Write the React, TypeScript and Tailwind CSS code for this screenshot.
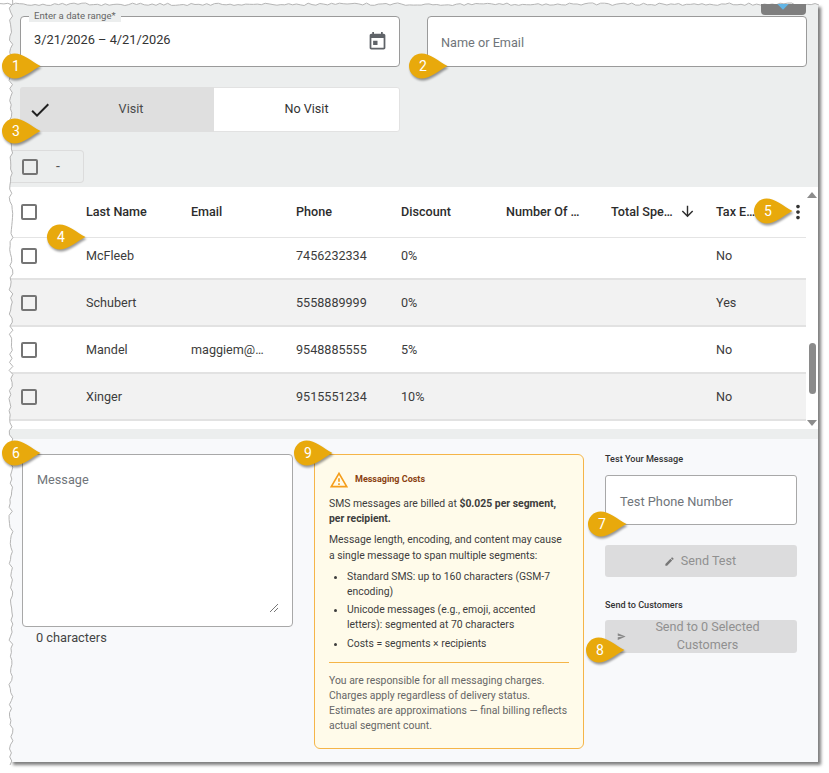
import { MdArrowDownward, MdCheck, MdEdit, MdMoreVert, MdOutlineWarningAmber, MdSend } from "react-icons/md"

const customers = [
  { last: "McFleeb", email: "", phone: "7456232334", discount: "0%", tax: "No" },
  { last: "Schubert", email: "", phone: "5558889999", discount: "0%", tax: "Yes" },
  { last: "Mandel", email: "maggiem@…", phone: "9548885555", discount: "5%", tax: "No" },
  { last: "Xinger", email: "", phone: "9515551234", discount: "10%", tax: "No" },
]

const headers = ["Last Name", "Email", "Phone", "Discount", "Number Of …"]

/** Screenshot-tool callout: a gold drop with its number. */
function Callout({ n, className }: { n: number; className: string }) {
  return (
    <div className={`absolute z-20 h-[26px] w-[40px] ${className}`}>
      <svg width="40" height="26" viewBox="0 0 40 26" className="absolute inset-0 drop-shadow-[1px_2px_1px_rgba(0,0,0,0.4)]">
        <path d="M13.5 0.5C22 0.5 31 8.5 39.5 13C31 17.5 22 25.5 13.5 25.5A12.5 12.5 0 0 1 13.5 0.5Z" fill="#e8a90c" />
      </svg>
      <span className="absolute left-0 top-0 w-[30px] text-center text-[14px] leading-[26px] text-white">{n}</span>
    </div>
  )
}

function Checkbox({ className = "" }: { className?: string }) {
  return <span className={`block h-[16px] w-[16px] rounded-[2px] border-2 border-[#757575] ${className}`} />
}

function jagged(points: number, length: number, seed: number, amp: number) {
  let v = seed
  const out: [number, number][] = []
  for (let i = 0; i <= points; i++) {
    v = (v * 9301 + 49297) % 233280
    out.push([(i / points) * length, (v / 233280) * amp])
  }
  return out
}

/** Torn left and top page edges drawn over the panel. */
function TornEdge() {
  const left = jagged(190, 765, 17, 4).map(([y, d]) => `${(9 + d).toFixed(1)},${y.toFixed(1)}`)
  const top = jagged(210, 819, 51, 2.5).map(([x, d]) => `${x.toFixed(1)},${(3 + d).toFixed(1)}`)
  return (
    <svg width="829" height="773" className="pointer-events-none absolute left-0 top-0 z-10">
      <polygon points={`0,0 ${top.join(" ")} 829,0`} fill="#fff" />
      <polygon points={`0,0 ${left.join(" ")} 0,773`} fill="#fff" />
      <polyline points={top.join(" ")} fill="none" stroke="#b5b5b5" strokeWidth="1" />
      <polyline points={left.join(" ")} fill="none" stroke="#b5b5b5" strokeWidth="1" />
    </svg>
  )
}

function CalendarIcon() {
  return (
    <svg width="21" height="21" viewBox="0 0 24 24" fill="#5f6368">
      <path d="M7 11h5v5H7zM16 1v2H8V1H6v2H5c-1.11 0-1.99.9-1.99 2L3 19c0 1.1.89 2 2 2h14c1.1 0 2-.9 2-2V5c0-1.1-.9-2-2-2h-1V1h-2zm3 18H5V8h14v11z" />
    </svg>
  )
}

function Table() {
  return (
    <div className="flex bg-white">
      <div className="w-[796px]">
        <div className="flex h-[51px] items-center whitespace-nowrap border-b border-[#e4e4e4] text-[12.6px] font-medium text-[#2c2c2c]">
          <div className="w-[76px] shrink-0 pl-[11px]">
            <Checkbox />
          </div>
          {headers.map((h) => (
            <div key={h} className="w-[105px] shrink-0">{h}</div>
          ))}
          <div className="flex w-[105px] shrink-0 items-center">
            Total Spe…
            <MdArrowDownward size={17} className="ml-[6px]" />
          </div>
          <div className="w-[71px] shrink-0">Tax E…</div>
          <MdMoreVert size={22} className="shrink-0 text-[#333]" />
        </div>
        <div className="h-[191px] overflow-hidden">
          <div className="-mt-[5px]">
            {customers.map((c, i) => (
              <div
                key={c.last}
                className={`flex h-[47px] items-center border-b-2 border-[#e2e2e2] pt-[2px] text-[12.6px] text-[#3c3c3c] ${i % 2 ? "bg-[#f2f2f2]" : "bg-white"}`}
              >
                <div className="-mt-[2px] w-[76px] pl-[11px]">
                  <Checkbox />
                </div>
                <div className="w-[105px]">{c.last}</div>
                <div className="w-[105px]">{c.email}</div>
                <div className="w-[105px]">{c.phone}</div>
                <div className="w-[105px]">{c.discount}</div>
                <div className="w-[210px]" />
                <div>{c.tax}</div>
              </div>
            ))}
          </div>
        </div>
      </div>
      <div className="relative flex w-[12px] flex-col items-center justify-between bg-white pb-[3px] pt-[5px]">
        <span className="h-0 w-0 border-x-[5px] border-b-[6px] border-x-transparent border-b-[#8c8c8c]" />
        <span className="absolute left-[3px] top-[156px] h-[51px] w-[7px] rounded-full bg-[#8a8a8a]" />
        <span className="h-0 w-0 border-x-[5px] border-t-[6px] border-x-transparent border-t-[#8c8c8c]" />
      </div>
    </div>
  )
}

function CostNotice() {
  return (
    <div className="h-[295px] w-[270px] rounded-[6px] border border-[#f5b548] bg-[#fffbea] px-[14px] pt-[15px] text-[10.4px] leading-[15.2px] text-[#3d3d3d]">
      <div className="flex items-center gap-[6px]">
        <MdOutlineWarningAmber size={20} className="text-[#f59e1b]" />
        <span className="text-[9px] font-bold text-[#8a3f10]">Messaging Costs</span>
      </div>
      <p className="mt-[6px]">
        SMS messages are billed at <b>$0.025 per segment, per recipient.</b>
      </p>
      <p className="mt-[6px]">Message length, encoding, and content may cause a single message to span multiple segments:</p>
      <ul className="mt-[6px] list-disc pl-[18px]">
        <li>Standard SMS: up to 160 characters (GSM-7 encoding)</li>
        <li className="mt-[3px]">Unicode messages (e.g., emoji, accented letters): segmented at 70 characters</li>
        <li className="mt-[3px]">Costs = segments × recipients</li>
      </ul>
      <div className="mt-[11px] whitespace-nowrap border-t border-[#f5b548] pt-[10px] text-[#666]">
        You are responsible for all messaging charges.
        <br />
        Charges apply regardless of delivery status.
        <br />
        Estimates are approximations — final billing reflects
        <br />
        actual segment count.
      </div>
    </div>
  )
}

export default function App() {
  return (
    <div className="relative h-[773px] w-[829px] overflow-hidden bg-white pt-[4px] font-['Roboto',sans-serif]">
      <div className="absolute left-[761px] top-[4px] z-20 h-[11px] w-[45px] overflow-hidden rounded-b-[4px] bg-[#7f7f7f]">
        <span className="absolute left-[18px] -top-[4px] h-[8px] w-[8px] rotate-45 bg-[#62b5e5]" />
      </div>
      <div className="ml-[10px] flex h-[758px] w-[808px] flex-col bg-[#eceeee] shadow-[3px_3px_3px_rgba(0,0,0,0.5)]">
        <div className="h-[183px] pt-[12px]">
          <div className="flex gap-[27px] pl-[10px]">
            <div className="relative flex h-[51px] w-[380px] items-center justify-between rounded-[4px] border border-[#9a9a9a] bg-white pl-[13px] pr-[11px] text-[12.8px] text-[#333]">
              <span className="absolute -top-[7px] left-[8px] bg-[#eceeee] px-[5px] text-[9.6px] leading-[12px] text-[#666]">Enter a date range*</span>
              <span className="-mt-[3px]">3/21/2026 – 4/21/2026</span>
              <CalendarIcon />
            </div>
            <div className="flex h-[51px] w-[380px] items-center rounded-[4px] border border-[#9a9a9a] bg-white pl-[13px] pt-[2px] text-[12.7px] text-[#70757a]">Name or Email</div>
          </div>
          <div className="ml-[10px] mt-[20px] flex h-[45px] w-[380px] overflow-hidden rounded-[3px] text-[12.6px]">
            <div className="relative flex w-[194px] items-center justify-center bg-[#dfdfdf] text-[#4a4a4a]">
              <MdCheck size={24} className="absolute left-[8px] text-[#222]" />
              <span className="pl-[28px]">Visit</span>
            </div>
            <div className="flex flex-1 items-center justify-center rounded-r-[3px] border border-l-0 border-[#e2e2e2] bg-white text-[#333]">No Visit</div>
          </div>
          <div className="mt-[18px] flex h-[33px] w-[74px] items-center gap-[18px] rounded-r-[4px] border border-l-0 border-[#dcdcdc] pl-[12px] text-[14px] text-[#555]">
            <Checkbox className="border-[#8a8a8a]" />
            <span>-</span>
          </div>
        </div>
        <Table />
        <div className="h-[10px] bg-[#eceeee]" />
        <div className="flex flex-1 gap-[21px] bg-[#f8f9fb] pl-[12px] pt-[15px]">
          <div className="w-[271px]">
            <div className="relative h-[173px] rounded-[4px] border border-[#a8a8a8] bg-white pl-[14px] pt-[17px] text-[12.7px] leading-[16px] text-[#70757a]">
              Message
              <svg width="8" height="8" className="absolute bottom-[14px] right-[14px]" stroke="#777" strokeWidth="1">
                <path d="M0 8L8 0M4 8L8 4" />
              </svg>
            </div>
            <div className="pl-[14px] pt-[1px] text-[12.8px] text-[#444]">0 characters</div>
          </div>
          <CostNotice />
          <div className="w-[192px] pl-0">
            <div className="ml-0 text-[9.1px] font-medium leading-[10px] text-[#333]">Test Your Message</div>
            <div className="mt-[11px] flex h-[50px] items-center rounded-[3px] border border-[#a8a8a8] bg-white pl-[14px] pt-[3px] text-[12.8px] text-[#70757a]">Test Phone Number</div>
            <div className="mt-[20px] flex h-[32px] items-center justify-center gap-[6px] rounded-[3px] bg-[#dcdcdd] pr-[2px] text-[12.6px] text-[#909090]">
              <MdEdit size={11} className="text-[#777]" />
              Send Test
            </div>
            <div className="mt-[23px] text-[9.1px] font-medium leading-[10px] text-[#333]">Send to Customers</div>
            <div className="mt-[10px] flex h-[33px] items-center rounded-[3px] bg-[#dcdcdd] pb-[1px] pl-[12px] text-[12.6px] leading-[18px] text-[#909090]">
              <MdSend size={9} className="shrink-0 text-[#888]" />
              <span className="flex-1 pr-[8px] text-center">Send to 0 Selected Customers</span>
            </div>
          </div>
        </div>
      </div>
      <TornEdge />
      <Callout n={1} className="left-[1px] top-[53px]" />
      <Callout n={2} className="left-[408px] top-[53px]" />
      <Callout n={3} className="left-[1px] top-[118px]" />
      <Callout n={4} className="left-[46px] top-[224px]" />
      <Callout n={5} className="left-[753px] top-[198px]" />
      <Callout n={6} className="left-[1px] top-[440px]" />
      <Callout n={7} className="left-[587px] top-[511px]" />
      <Callout n={8} className="left-[585px] top-[637px]" />
      <Callout n={9} className="left-[293px] top-[440px]" />
    </div>
  )
}
